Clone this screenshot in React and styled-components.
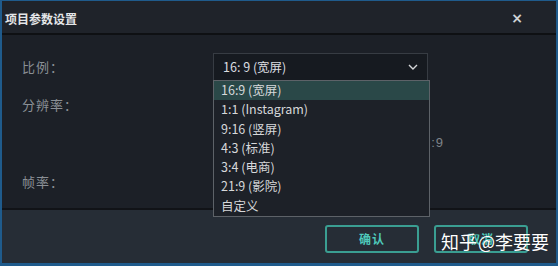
import React from "react";
import styled, { createGlobalStyle } from "styled-components";

const Global = createGlobalStyle`
  html, body { margin: 0; padding: 0; background: #1c2027; }
  body { font-family: "Noto Sans CJK SC", "Noto Sans", sans-serif; }
`;

const Window = styled.div`
  width: 558px;
  height: 266px;
  box-sizing: border-box;
  border: 2px solid #1f5b8c;
  border-top-width: 1px;
  border-bottom-width: 3px;
  display: flex;
  flex-direction: column;
  position: relative;
  overflow: hidden;
  background: #1c2027;
`;

const TitleBar = styled.div`
  height: 34px;
  flex: none;
  background: #1f232a;
  border-bottom: 2px solid #0e1013;
  display: flex;
  align-items: center;
  justify-content: space-between;
  padding: 2px 33px 0 3px;
  box-sizing: border-box;
`;

const Title = styled.span`
  color: #e4e6e8;
  font-size: 12px;
  font-weight: 700;
`;

const Close = styled.span`
  color: #d0d3d6;
  font-size: 14px;
  font-weight: 700;
  font-family: "DejaVu Sans", sans-serif;
`;

const Body = styled.div`
  flex: 1;
  position: relative;
  padding: 17px 0 0 20px;
  border-bottom: 2px solid #111317;
`;

const Row = styled.div`
  display: flex;
  align-items: center;
  height: ${(p) => p.$h}px;
`;

const Label = styled.span`
  width: 191px;
  color: #8b9096;
  font-size: 13px;
  letter-spacing: 1px;
`;

const Select = styled.div`
  width: 215px;
  height: 28px;
  box-sizing: border-box;
  background: #161a20;
  border: 1px solid #373c43;
  display: flex;
  align-items: center;
  justify-content: space-between;
  padding: 0 9px 0 9px;
  color: #dcdee0;
  font-size: 12.5px;
`;

const Hint = styled.span`
  width: 422px;
  text-align: right;
  color: #7f848a;
  font-size: 13px;
  letter-spacing: 1px;
  font-family: "Liberation Sans", sans-serif;
  white-space: nowrap;
`;

const Menu = styled.ul`
  position: absolute;
  left: 211px;
  top: 45px;
  width: 217px;
  margin: 0;
  padding: 0;
  list-style: none;
  box-sizing: border-box;
  background: #1d2128;
  border: 1px solid #5d6268;
  z-index: 2;
`;

const Item = styled.li`
  height: 19.3px;
  line-height: 17.5px;
  padding-left: 7px;
  color: #d6d8da;
  font-size: 12.5px;
  background: ${(p) => (p.$active ? "#2a4848" : "transparent")};
`;

const Footer = styled.div`
  height: 53px;
  flex: none;
  background: #262d36;
  display: flex;
  align-items: center;
  justify-content: flex-end;
  gap: 15px;
  padding: 4px 28px 0 0;
  box-sizing: border-box;
`;

const Button = styled.button`
  width: 94px;
  height: 28px;
  box-sizing: border-box;
  background: transparent;
  border: 2px solid #3a9e92;
  border-radius: 3px;
  color: #4fc9bb;
  font-family: "Noto Sans CJK SC", sans-serif;
  font-size: 12px;
  font-weight: 700;
  letter-spacing: 1px;
`;

const Watermark = styled.span`
  position: absolute;
  left: 439px;
  top: 231px;
  line-height: 18px;
  color: #ffffff;
  font-size: 18px;
  white-space: nowrap;
  word-spacing: -3px;
  z-index: 3;
  text-shadow: 0 0 1px rgba(0, 0, 0, 0.4);
`;

const Chevron = () => (
  <svg width="10" height="6" viewBox="0 0 10 6">
    <path d="M1 1 L5 5 L9 1" fill="none" stroke="#d5d7d9" strokeWidth="1.4" />
  </svg>
);

const options = ["16:9 (宽屏)", "1:1 (Instagram)", "9:16 (竖屏)", "4:3 (标准)", "3:4 (电商)", "21:9 (影院)", "自定义"];

export default function App() {
  return (
    <>
      <Global />
      <Window>
        <TitleBar>
          <Title>项目参数设置</Title>
          <Close>×</Close>
        </TitleBar>
        <Body>
          <Row $h={29}>
            <Label>比例：</Label>
            <Select>
              <span>16: 9 (宽屏)</span>
              <Chevron />
            </Select>
          </Row>
          <Row $h={46}>
            <Label>分辨率：</Label>
          </Row>
          <Row $h={30}>
            <Hint>1920 × 1080 16:9</Hint>
          </Row>
          <Row $h={48}>
            <Label>帧率：</Label>
          </Row>
          <Menu>
            {options.map((o, i) => (
              <Item key={o} $active={i === 0}>{o}</Item>
            ))}
          </Menu>
        </Body>
        <Footer>
          <Button>确认</Button>
          <Button>取消</Button>
        </Footer>
        <Watermark>知乎 @李要要</Watermark>
      </Window>
    </>
  );
}
